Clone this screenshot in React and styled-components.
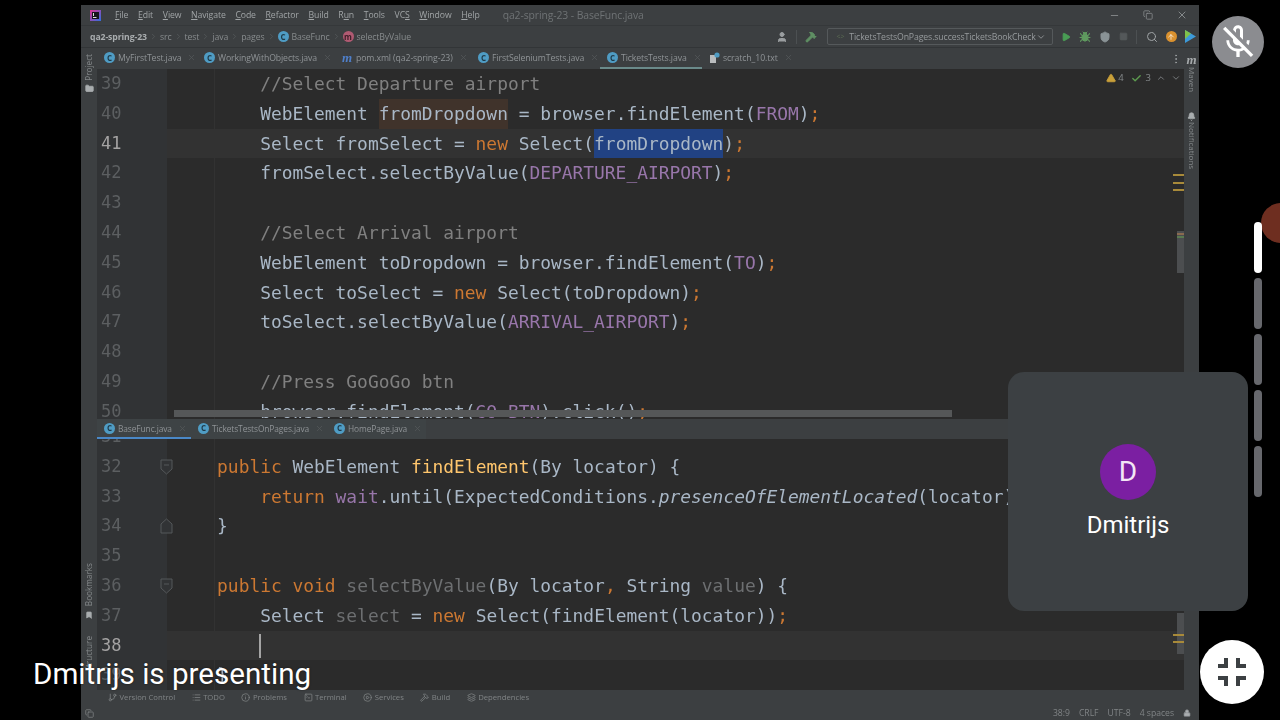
import React from 'react';
import styled, { createGlobalStyle } from 'styled-components';
import {
  Minus,
  Copy,
  X,
  Search,
  Bug,
  Hammer,
  Play,
  ChevronDown,
  ChevronUp,
  ChevronRight,
  Folder,
  Bookmark,
  Bell,
  GitBranch,
  List,
  Info,
  SquareTerminal,
  CirclePlay,
  Layers,
  Lock,
  Square,
  User,
  ShieldCheck,
  EllipsisVertical,
  TriangleAlert,
  Check,
  ArrowUp,
} from 'lucide-react';
import { MdOutlineMicOff } from 'react-icons/md';

const GlobalStyle = createGlobalStyle`
  html, body {
    margin: 0;
    padding: 0;
    width: 1280px;
    height: 720px;
    background: #000;
    overflow: hidden;
  }
  * {
    box-sizing: border-box;
  }
`;

const UI_FONT = '"Open Sans", "Noto Sans", sans-serif';
const CODE_FONT = '"DejaVu Sans Mono", "Liberation Mono", monospace';

const Stage = styled.div`
  position: relative;
  width: 1280px;
  height: 720px;
  padding: 5px 81px 0;
  overflow: hidden;
  background: #000;
`;

const Ide = styled.div`
  display: flex;
  flex-direction: column;
  width: 1118px;
  height: 715px;
  background: #3c3f41;
  font-family: ${UI_FONT};
  color: #8f9396;
  filter: blur(0.35px);
`;

const TitleBar = styled.div`
  display: flex;
  align-items: center;
  height: 21px;
  flex: none;
  padding: 0 0 0 9px;
  border-bottom: 1px solid #35383a;
  font-size: 8.7px;
  letter-spacing: -0.1px;
`;

const Menu = styled.div`
  display: flex;
  gap: 9.7px;
  margin-left: 14px;
  color: #a0a4a6;
`;

const WindowTitle = styled.div`
  margin-left: 23px;
  font-size: 10.4px;
  color: #6f7375;
`;

const WindowButtons = styled.div`
  display: flex;
  align-items: center;
  gap: 23px;
  margin-left: auto;
  padding-right: 11px;
  color: #85898b;
`;

const NavBar = styled.div`
  display: flex;
  align-items: center;
  height: 22px;
  flex: none;
  padding: 0 3px 0 9px;
  font-size: 8.7px;
  letter-spacing: -0.1px;
  border-bottom: 1px solid #323537;
`;

const Crumb = styled.span`
  display: inline-flex;
  align-items: center;
  gap: 3px;
  color: ${(p) => (p.$strong ? '#a9adaf' : '#878b8d')};
  font-weight: ${(p) => (p.$strong ? 700 : 400)};
`;

const CrumbSep = styled(ChevronRight)`
  margin: 0 2px;
  color: #55595b;
`;

const ActionGroup = styled.div`
  display: flex;
  align-items: center;
  gap: 8.2px;
  margin-left: auto;
`;

const ToolSep = styled.span`
  width: 1px;
  height: 14px;
  background: #4c5052;
`;

const RunConfig = styled.div`
  display: flex;
  align-items: center;
  width: 226px;
  height: 17px;
  padding: 0 6px 0 9px;
  margin-left: 1px;
  border: 1px solid #55595b;
  border-radius: 2px;
  color: #979b9d;
  white-space: nowrap;
`;

const RunDot = styled.span`
  margin-right: 5px;
  color: #5a6b52;
  font-size: 7px;
`;

const RunCaret = styled(ChevronDown)`
  margin-left: auto;
  flex: none;
`;

const RoundBadge = styled.span`
  display: inline-flex;
  align-items: center;
  justify-content: center;
  width: 11px;
  height: 11px;
  border-radius: 50%;
  background: ${(p) => p.$bg};
  color: ${(p) => p.$fg};
  font-size: 8px;
  font-weight: 700;
  line-height: 1;
  flex: none;
`;

const Body = styled.div`
  display: flex;
  flex: 1;
  min-height: 0;
`;

const LeftStrip = styled.div`
  display: flex;
  flex-direction: column;
  align-items: center;
  width: 16px;
  flex: none;
  padding-top: 6px;
  font-size: 8.2px;
  color: #85898b;
`;

const RightStrip = styled.div`
  display: flex;
  flex-direction: column;
  align-items: center;
  width: 15px;
  flex: none;
  padding-top: 5px;
  font-size: 8px;
  color: #85898b;
`;

const SideLabel = styled.span`
  writing-mode: vertical-rl;
  transform: ${(p) => (p.$up ? 'rotate(180deg)' : 'none')};
  line-height: 12px;
  margin-bottom: ${(p) => p.$after || 0}px;
`;

const MavenMark = styled.span`
  font-family: "Liberation Serif", serif;
  font-style: italic;
  font-weight: 700;
  font-size: 13px;
  line-height: 14px;
  color: #a5a9ab;
`;

const StripPush = styled.div`
  margin-top: ${(p) => p.$top}px;
`;

const Center = styled.div`
  display: flex;
  flex-direction: column;
  flex: 1;
  min-width: 0;
`;

const TabBar = styled.div`
  display: flex;
  height: ${(p) => p.$h}px;
  flex: none;
  align-items: stretch;
`;

const Tab = styled.div`
  display: flex;
  align-items: center;
  width: ${(p) => p.$w}px;
  padding-left: 7px;
  flex: none;
  font-size: ${(p) => p.$size || 8.7}px;
  letter-spacing: -0.1px;
  color: #8f9396;
  white-space: nowrap;
  background: ${(p) => (p.$lower ? '#3e4345' : 'transparent')};
  border-bottom: 2px solid ${(p) => p.$line || 'transparent'};
`;

const TabLabel = styled.span`
  margin-left: 3px;
`;

const TabClose = styled(X)`
  margin-left: 6px;
  color: #54585a;
`;

const PomMark = styled.span`
  width: 11px;
  font-family: "Liberation Serif", serif;
  font-style: italic;
  font-weight: 700;
  font-size: 13px;
  line-height: 11px;
  color: #4f7fc9;
`;

const TabsEnd = styled.div`
  display: flex;
  align-items: center;
  margin-left: auto;
  padding-right: 2px;
  color: #9a9ea0;
`;

const Editor = styled.div`
  position: relative;
  height: ${(p) => p.$h}px;
  flex: none;
  overflow: hidden;
  background: #2b2b2b;
  font-family: ${CODE_FONT};
  font-size: 17.9px;
  color: #a9b7c6;
`;

const GutterFill = styled.div`
  position: absolute;
  left: 0;
  top: 0;
  bottom: 0;
  width: 70px;
  background: #313335;
`;

const IndentGuide = styled.div`
  position: absolute;
  left: 117px;
  top: 0;
  bottom: 0;
  width: 1px;
  background: #323232;
`;

const Lines = styled.div`
  position: relative;
  margin-top: ${(p) => p.$shift || 0}px;
`;

const Row = styled.div`
  position: relative;
  display: grid;
  grid-template-columns: 70px 1fr;
  height: 29.8px;
  line-height: 29.8px;
  background: ${(p) => (p.$current ? '#323232' : 'transparent')};
`;

const LineNo = styled.span`
  padding-left: 4px;
  font-size: 17px;
  color: ${(p) => (p.$current ? '#a4a3a3' : '#5c5f61')};
  background: #313335;
`;

const Code = styled.span`
  padding-left: 7px;
  white-space: pre;
`;

const TOKEN_COLORS = {
  key: '#cc7832',
  field: '#9876aa',
  note: '#808080',
  method: '#ffc66d',
  unused: '#6d6f71',
  plain: '#a9b7c6',
  sel: '#a9b7c6',
  hit: '#a9b7c6',
  ital: '#a9b7c6',
};

const Token = styled.span`
  display: inline-block;
  height: 29.8px;
  color: ${(p) => TOKEN_COLORS[p.$kind]};
  font-style: ${(p) => (p.$kind === 'ital' ? 'italic' : 'normal')};
  background: ${(p) =>
    p.$kind === 'sel' ? '#214283' : p.$kind === 'hit' ? '#40332b' : 'transparent'};
`;

const FoldMark = styled.svg`
  position: absolute;
  left: 63px;
  top: 7px;
  color: #55585a;
`;

const Caret = styled.span`
  position: absolute;
  left: 162px;
  top: 3px;
  width: 2px;
  height: 24px;
  background: #a4a4a4;
`;

const HScroll = styled.div`
  position: absolute;
  left: 77px;
  bottom: 2px;
  width: 778px;
  height: 7px;
  background: #555758;
`;

const VThumb = styled.div`
  position: absolute;
  right: 0;
  top: ${(p) => p.$top}px;
  width: 7px;
  height: ${(p) => p.$h}px;
  background: #4c4e50;
`;

const StripeMark = styled.div`
  position: absolute;
  right: 0;
  top: ${(p) => p.$top}px;
  width: ${(p) => p.$w || 11}px;
  height: 2px;
  background: ${(p) => p.$color || '#a88a3a'};
`;

const Inspections = styled.div`
  position: absolute;
  top: 3px;
  right: 3px;
  display: flex;
  align-items: center;
  gap: 2px;
  font-family: ${UI_FONT};
  font-size: 9.5px;
  line-height: 12px;
  color: #85898b;
`;

const InspectGap = styled.span`
  width: ${(p) => p.$w}px;
`;

const ToolBar = styled.div`
  display: flex;
  align-items: center;
  gap: 16.5px;
  height: 18px;
  flex: none;
  padding-left: 27px;
  font-size: 7.7px;
  color: #808486;
`;

const ToolItem = styled.span`
  display: inline-flex;
  align-items: center;
  gap: 2.5px;
`;

const StatusBar = styled.div`
  display: flex;
  align-items: center;
  height: 14px;
  flex: none;
  padding: 0 8px 0 4px;
  font-size: 8.6px;
  color: #808486;
`;

const StatusRight = styled.div`
  display: flex;
  align-items: center;
  gap: 9px;
  margin-left: auto;
`;

const Tile = styled.div`
  position: absolute;
  left: 1008px;
  top: 372px;
  display: flex;
  flex-direction: column;
  align-items: center;
  justify-content: center;
  gap: 11px;
  width: 240px;
  height: 239px;
  border-radius: 16px;
  background: #3c4043;
  font-family: Roboto, sans-serif;
`;

const Avatar = styled.div`
  display: flex;
  align-items: center;
  justify-content: center;
  width: 56px;
  height: 56px;
  border-radius: 50%;
  background: #7b1fa2;
  color: #f3e5f5;
  font-size: 28px;
`;

const TileName = styled.div`
  color: #fff;
  font-size: 24px;
  line-height: 29px;
`;

const MicBadge = styled.div`
  position: absolute;
  left: 1212px;
  top: 16px;
  display: flex;
  align-items: center;
  justify-content: center;
  width: 52px;
  height: 52px;
  border-radius: 50%;
  background: #8b8c90;
  color: #fff;
`;

const ExitButton = styled.div`
  position: absolute;
  left: 1200px;
  top: 640px;
  display: flex;
  align-items: center;
  justify-content: center;
  width: 64px;
  height: 64px;
  border-radius: 50%;
  background: #fff;
  color: #3c4043;
`;

const RedDot = styled.div`
  position: absolute;
  left: 1261px;
  top: 203px;
  width: 40px;
  height: 40px;
  border-radius: 50%;
  background: #6e2e20;
`;

const Pager = styled.div`
  position: absolute;
  left: 1254px;
  top: 222px;
  display: flex;
  flex-direction: column;
  gap: 5px;
`;

const PagerPill = styled.div`
  width: 8px;
  height: 51px;
  border-radius: 4px;
  background: ${(p) => (p.$active ? '#fff' : '#67686d')};
`;

const Presenting = styled.div`
  position: absolute;
  left: 33px;
  top: 656px;
  font-family: Roboto, sans-serif;
  font-size: 29.6px;
  line-height: 36px;
  color: #fff;
  text-shadow: 0 0 2px rgba(0, 0, 0, 0.6);
`;

const MENU = [
  ['F', 'ile'],
  ['E', 'dit'],
  ['V', 'iew'],
  ['N', 'avigate'],
  ['C', 'ode'],
  ['R', 'efactor'],
  ['B', 'uild'],
  ['R', 'un'],
  ['T', 'ools'],
  ['VC', 'S'],
  ['W', 'indow'],
  ['H', 'elp'],
];

const ClassIcon = () => (
  <RoundBadge $bg="#4f9cc4" $fg="#1f3a48">
    C
  </RoundBadge>
);

const TOP_TABS = [
  { name: 'MyFirstTest.java', w: 100, icon: <ClassIcon /> },
  { name: 'WorkingWithObjects.java', w: 138, icon: <ClassIcon /> },
  { name: 'pom.xml (qa2-spring-23)', w: 136, icon: <PomMark>m</PomMark> },
  { name: 'FirstSeleniumTests.java', w: 129, icon: <ClassIcon /> },
  { name: 'TicketsTests.java', w: 102, icon: <ClassIcon />, line: '#6a8a8a' },
  {
    name: 'scratch_10.txt',
    w: 95,
    icon: (
      <svg width="11" height="12" viewBox="0 0 11 12">
        <path d="M1 3h6v8H1z" fill="#b9bcbe" />
        <circle cx="8" cy="3" r="2.6" fill="#4f9cc4" />
      </svg>
    ),
  },
];

const BOTTOM_TABS = [
  { name: 'BaseFunc.java', w: 94, line: '#4a88c7' },
  { name: 'TicketsTestsOnPages.java', w: 136 },
  { name: 'HomePage.java', w: 99 },
];

// [number, tokens] - tokens are [text, kind]
const UPPER = [
  [39, [['        //Select Departure airport', 'note']]],
  [40, [['        WebElement ', 'plain'], ['fromDropdown', 'hit'], [' = browser.findElement(', 'plain'], ['FROM', 'field'], [')', 'plain'], [';', 'key']]],
  [41, [['        Select fromSelect = ', 'plain'], ['new', 'key'], [' Select(', 'plain'], ['fromDropdown', 'sel'], [')', 'plain'], [';', 'key']], true],
  [42, [['        fromSelect.selectByValue(', 'plain'], ['DEPARTURE_AIRPORT', 'field'], [')', 'plain'], [';', 'key']]],
  [43, []],
  [44, [['        //Select Arrival airport', 'note']]],
  [45, [['        WebElement toDropdown = browser.findElement(', 'plain'], ['TO', 'field'], [')', 'plain'], [';', 'key']]],
  [46, [['        Select toSelect = ', 'plain'], ['new', 'key'], [' Select(toDropdown)', 'plain'], [';', 'key']]],
  [47, [['        toSelect.selectByValue(', 'plain'], ['ARRIVAL_AIRPORT', 'field'], [')', 'plain'], [';', 'key']]],
  [48, []],
  [49, [['        //Press GoGoGo btn', 'note']]],
  [50, [['        browser.findElement(', 'plain'], ['GO_BTN', 'field'], [').click()', 'plain'], [';', 'key']]],
];

const LOWER = [
  [31, []],
  [32, [['    ', 'plain'], ['public', 'key'], [' WebElement ', 'plain'], ['findElement', 'method'], ['(By locator) {', 'plain']]],
  [33, [['        ', 'plain'], ['return', 'key'], [' ', 'plain'], ['wait', 'field'], ['.until(ExpectedConditions.', 'plain'], ['presenceOfElementLocated', 'ital'], ['(locator))', 'plain'], [';', 'key']]],
  [34, [['    }', 'plain']]],
  [35, []],
  [36, [['    ', 'plain'], ['public void', 'key'], [' ', 'plain'], ['selectByValue', 'unused'], ['(By locator', 'plain'], [',', 'key'], [' String ', 'plain'], ['value', 'unused'], [') {', 'plain']]],
  [37, [['        Select ', 'plain'], ['select', 'unused'], [' = ', 'plain'], ['new', 'key'], [' Select(findElement(locator))', 'plain'], [';', 'key']]],
  [38, [], true],
  [39, [['    }', 'plain']]],
];

const FOLDS = { 32: 'open', 34: 'close', 36: 'open' };

const Fold = ({ type }) => (
  <FoldMark width="13" height="16" viewBox="0 0 13 16" fill="none">
    {type === 'open' ? (
      <path d="M1 1h11v9l-5.5 5L1 10z" stroke="currentColor" fill="#313335" />
    ) : (
      <path d="M1 15h11V6L6.5 1 1 6z" stroke="currentColor" fill="#313335" />
    )}
    {type === 'open' && <path d="M4 6h5" stroke="currentColor" />}
  </FoldMark>
);

const CodeLines = ({ lines, shift, caretOn }) => (
  <Lines $shift={shift}>
    {lines.map(([no, tokens, current]) => (
      <Row key={no} $current={current}>
        <LineNo $current={current}>{no}</LineNo>
        <Code>
          {tokens.map(([text, kind], i) => (
            <Token key={i} $kind={kind}>
              {text}
            </Token>
          ))}
        </Code>
        {FOLDS[no] && caretOn && <Fold type={FOLDS[no]} />}
        {caretOn && current && <Caret />}
      </Row>
    ))}
  </Lines>
);

const Logo = () => (
  <svg width="11" height="11" viewBox="0 0 11 11">
    <defs>
      <linearGradient id="ideaLogo" x1="0" y1="0" x2="1" y2="1">
        <stop offset="0" stopColor="#e0338f" />
        <stop offset="1" stopColor="#2f6fe0" />
      </linearGradient>
    </defs>
    <rect width="11" height="11" fill="url(#ideaLogo)" />
    <rect x="2" y="2" width="7" height="7" fill="#15151c" />
    <rect x="3" y="7" width="3.5" height="1" fill="#ddd" />
    <rect x="3" y="3" width="1" height="3" fill="#ddd" />
  </svg>
);

const App = () => {
  return (
    <>
      <GlobalStyle />
      <Stage>
        <Ide>
          <TitleBar>
            <Logo />
            <Menu>
              {MENU.map(([a, b]) =>
                a === 'VC' ? (
                  <span key={a}>
                    VC<u>S</u>
                  </span>
                ) : b === 'un' ? (
                  <span key={b}>
                    R<u>u</u>n
                  </span>
                ) : (
                  <span key={b}>
                    <u>{a}</u>
                    {b}
                  </span>
                )
              )}
            </Menu>
            <WindowTitle>qa2-spring-23 - BaseFunc.java</WindowTitle>
            <WindowButtons>
              <Minus size={11} />
              <Copy size={10} />
              <X size={12} />
            </WindowButtons>
          </TitleBar>
          <NavBar>
            <Crumb $strong>qa2-spring-23</Crumb>
            <CrumbSep size={9} />
            <Crumb>src</Crumb>
            <CrumbSep size={9} />
            <Crumb>test</Crumb>
            <CrumbSep size={9} />
            <Crumb>java</Crumb>
            <CrumbSep size={9} />
            <Crumb>pages</Crumb>
            <CrumbSep size={9} />
            <Crumb>
              <ClassIcon />
              BaseFunc
            </Crumb>
            <CrumbSep size={9} />
            <Crumb>
              <RoundBadge $bg="#b05a72" $fg="#3c1c26">
                m
              </RoundBadge>
              selectByValue
            </Crumb>
            <ActionGroup>
              <User size={12} color="#9a9ea0" fill="#9a9ea0" />
              <ToolSep />
              <Hammer size={12} color="#5f8f63" fill="#5f8f63" />
              <RunConfig>
                <RunDot>{'<>'}</RunDot>
                TicketsTestsOnPages.successTicketsBookCheck
                <RunCaret size={10} />
              </RunConfig>
              <Play size={10} color="#499c54" fill="#499c54" />
              <Bug size={12} color="#5f9a5f" fill="#5f9a5f" />
              <ShieldCheck size={12} color="#8a9396" fill="#8a9396" />
              <Square size={9} color="#54585a" fill="#54585a" />
              <ToolSep />
              <Search size={12} color="#a0a4a6" />
              <RoundBadge $bg="#d9912f" $fg="#fff">
                <ArrowUp size={8} />
              </RoundBadge>
              <svg width="11" height="13" viewBox="0 0 11 13">
                <path d="M0 0l11 6.5L0 13z" fill="#3d9ad9" />
                <path d="M0 0l6 3.5L0 9z" fill="#7fc24a" />
              </svg>
            </ActionGroup>
          </NavBar>
          <Body>
            <LeftStrip>
              <SideLabel $up $after={3}>
                Project
              </SideLabel>
              <Folder size={9} fill="#a9adaf" color="#a9adaf" />
              <StripPush $top={470} />
              <SideLabel $up $after={5}>
                Bookmarks
              </SideLabel>
              <Bookmark size={8} fill="#a9adaf" color="#a9adaf" />
              <StripPush $top={17} />
              <SideLabel $up>Structure</SideLabel>
            </LeftStrip>
            <Center>
              <TabBar $h={21}>
                {TOP_TABS.map((t) => (
                  <Tab key={t.name} $w={t.w} $line={t.line}>
                    {t.icon}
                    <TabLabel>{t.name}</TabLabel>
                    <TabClose size={9} />
                  </Tab>
                ))}
                <TabsEnd>
                  <EllipsisVertical size={12} />
                </TabsEnd>
              </TabBar>
              <Editor $h={350}>
                <GutterFill />
                <IndentGuide />
                <CodeLines lines={UPPER} />
                <HScroll />
                <StripeMark $top={105} />
                <StripeMark $top={113} />
                <StripeMark $top={120} />
                <VThumb $top={162} $h={42} />
                <StripeMark $top={164} $color="#8a6a50" $w={7} />
                <StripeMark $top={167} $color="#5a7a50" $w={7} />
                <Inspections>
                  <TriangleAlert size={10} color="#c9a03a" fill="#c9a03a" />
                  <span>4</span>
                  <InspectGap $w={3} />
                  <Check size={11} color="#5d9b4f" strokeWidth={3} />
                  <InspectGap $w={0} />
                  <span>3</span>
                  <InspectGap $w={1} />
                  <ChevronUp size={10} />
                  <InspectGap $w={1} />
                  <ChevronDown size={10} />
                </Inspections>
              </Editor>
              <TabBar $h={20}>
                {BOTTOM_TABS.map((t) => (
                  <Tab key={t.name} $w={t.w} $line={t.line} $size={8.4} $lower>
                    <ClassIcon />
                    <TabLabel>{t.name}</TabLabel>
                    <TabClose size={9} />
                  </Tab>
                ))}
              </TabBar>
              <Editor $h={251}>
                <GutterFill />
                <IndentGuide />
                <CodeLines lines={LOWER} shift={-17} caretOn />
                <VThumb $top={174} $h={41} />
                <StripeMark $top={195} />
                <StripeMark $top={202} />
              </Editor>
            </Center>
            <RightStrip>
              <MavenMark>m</MavenMark>
              <SideLabel $after={20}>Maven</SideLabel>
              <Bell size={9} fill="#a9adaf" color="#a9adaf" />
              <StripPush $top={1} />
              <SideLabel>Notifications</SideLabel>
            </RightStrip>
          </Body>
          <ToolBar>
            <ToolItem>
              <GitBranch size={9} />
              Version Control
            </ToolItem>
            <ToolItem>
              <List size={9} />
              TODO
            </ToolItem>
            <ToolItem>
              <Info size={9} />
              Problems
            </ToolItem>
            <ToolItem>
              <SquareTerminal size={9} />
              Terminal
            </ToolItem>
            <ToolItem>
              <CirclePlay size={9} />
              Services
            </ToolItem>
            <ToolItem>
              <Hammer size={9} />
              Build
            </ToolItem>
            <ToolItem>
              <Layers size={9} />
              Dependencies
            </ToolItem>
          </ToolBar>
          <StatusBar>
            <Copy size={9} />
            <StatusRight>
              <span>38:9</span>
              <span>CRLF</span>
              <span>UTF-8</span>
              <span>4 spaces</span>
              <Lock size={8} fill="#a9adaf" />
            </StatusRight>
          </StatusBar>
        </Ide>
        <Presenting>Dmitrijs is presenting</Presenting>
        <Tile>
          <Avatar>D</Avatar>
          <TileName>Dmitrijs</TileName>
        </Tile>
        <MicBadge>
          <MdOutlineMicOff size={40} />
        </MicBadge>
        <RedDot />
        <Pager>
          <PagerPill $active />
          <PagerPill />
          <PagerPill />
          <PagerPill />
          <PagerPill />
        </Pager>
        <ExitButton>
          <svg width="48" height="48" viewBox="0 0 24 24" fill="currentColor">
            <path d="M5 16h3v3h2v-5H5v2zm3-8H5v2h5V5H8v3zm6 11h2v-3h3v-2h-5v5zm2-11V5h-2v5h5V8h-3z" />
          </svg>
        </ExitButton>
      </Stage>
    </>
  );
};

export default App;
